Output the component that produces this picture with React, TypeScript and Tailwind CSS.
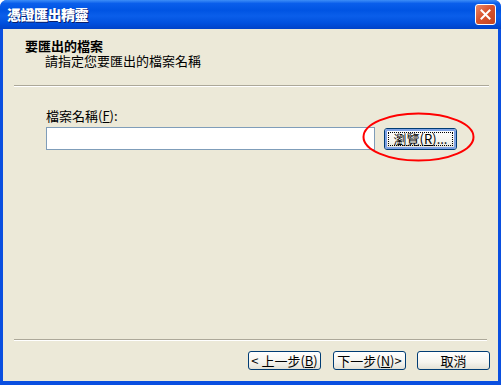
import React from "react";

const font = { fontFamily: '"Noto Sans CJK TC", "Noto Sans", sans-serif' };

const XpButton: React.FC<{ children: React.ReactNode; focused?: boolean; className?: string }> = ({
  children,
  focused,
  className = "",
}) => (
  <button
    type="button"
    className={`flex items-center justify-center rounded-[3px] border border-[#003C74] bg-[linear-gradient(180deg,#ffffff_0%,#f5f4ef_60%,#e3e1d6_100%)] p-0 text-[13px] leading-none text-black ${className}`}
  >
    {focused ? (
      <span className="flex h-full w-full items-center justify-center rounded-[2px] border-2 border-[#7FA2E4] p-[1px]">
        <span className="flex h-full w-full items-center justify-center border border-dotted border-black">
          {children}
        </span>
      </span>
    ) : (
      children
    )}
  </button>
);

const Key: React.FC<{ k: string }> = ({ k }) => (
  <span>
    (<span className="underline">{k}</span>)
  </span>
);

export default function App() {
  return (
    <div className="h-[385px] w-[501px] bg-white" style={font}>
      <div className="flex h-full w-full flex-col rounded-t-[7px] bg-[#0A4FE0] px-[3px] pb-[4px]">
        {/* title bar */}
        <div className="-mx-[3px] flex h-[29px] shrink-0 items-center justify-between rounded-t-[7px] bg-[linear-gradient(180deg,#3D8DF7_0%,#0A5EEB_12%,#0054E3_35%,#0A5EEA_55%,#0050DE_80%,#0042C8_100%)] pl-[7px] pr-[5px]">
          <span className="text-[14px] font-black tracking-[-0.5px] text-white [text-shadow:1px_1px_0_#0A1E6A]">
            憑證匯出精靈
          </span>
          <div className="flex h-[21px] w-[21px] items-center justify-center rounded-[3px] border border-white bg-[linear-gradient(135deg,#E98A6A_0%,#D9532E_45%,#C24420_100%)]">
            <svg width="11" height="11" viewBox="0 0 11 11">
              <path d="M1.5 1.5 L9.5 9.5 M9.5 1.5 L1.5 9.5" stroke="white" strokeWidth="2" strokeLinecap="square" />
            </svg>
          </div>
        </div>

        {/* client area */}
        <div className="relative flex flex-1 flex-col bg-[#ECE9D8] text-black">
          {/* header */}
          <div className="flex h-[56px] shrink-0 flex-col pl-[22px] pt-[9px] text-[13px] leading-[15px]">
            <span className="font-bold">要匯出的檔案</span>
            <span className="pl-[20px]">請指定您要匯出的檔案名稱</span>
          </div>
          <div className="ml-[11px] mr-[9px] border-b border-t border-b-white border-t-[#ACA899]" />

          {/* content */}
          <div className="flex flex-1 flex-col pl-[43px] pt-[21px]">
            <span className="text-[13px] leading-[16px]">
              檔案名稱<Key k="F" />:
            </span>
            <div className="mt-[3px] flex items-center gap-[9px]">
              <div className="h-[23px] w-[329px] shrink-0 border border-[#7F9DB9] bg-white" />
              <XpButton focused className="h-[22px] w-[73px] shrink-0">
                瀏覽<Key k="R" />...
              </XpButton>
            </div>
          </div>

          <div className="ml-[11px] mr-[11px] border-b border-t border-b-white border-t-[#ACA899]" />

          {/* footer buttons */}
          <div className="flex h-[40px] shrink-0 justify-end gap-[12px] pr-[8px] pt-[10px]">
            <XpButton className="h-[19px] w-[73px]">
              &lt; 上一步<Key k="B" />
            </XpButton>
            <XpButton className="h-[19px] w-[73px]">
              下一步<Key k="N" /> &gt;
            </XpButton>
            <XpButton className="-ml-[1px] h-[19px] w-[73px]">取消</XpButton>
          </div>

          {/* red annotation ellipse */}
          <svg className="pointer-events-none absolute left-[359px] top-[83px]" width="113" height="50" viewBox="0 0 113 50">
            <ellipse cx="56.5" cy="25" rx="55" ry="23.5" fill="none" stroke="#FF0000" strokeWidth="2" />
          </svg>
        </div>
      </div>
    </div>
  );
}
